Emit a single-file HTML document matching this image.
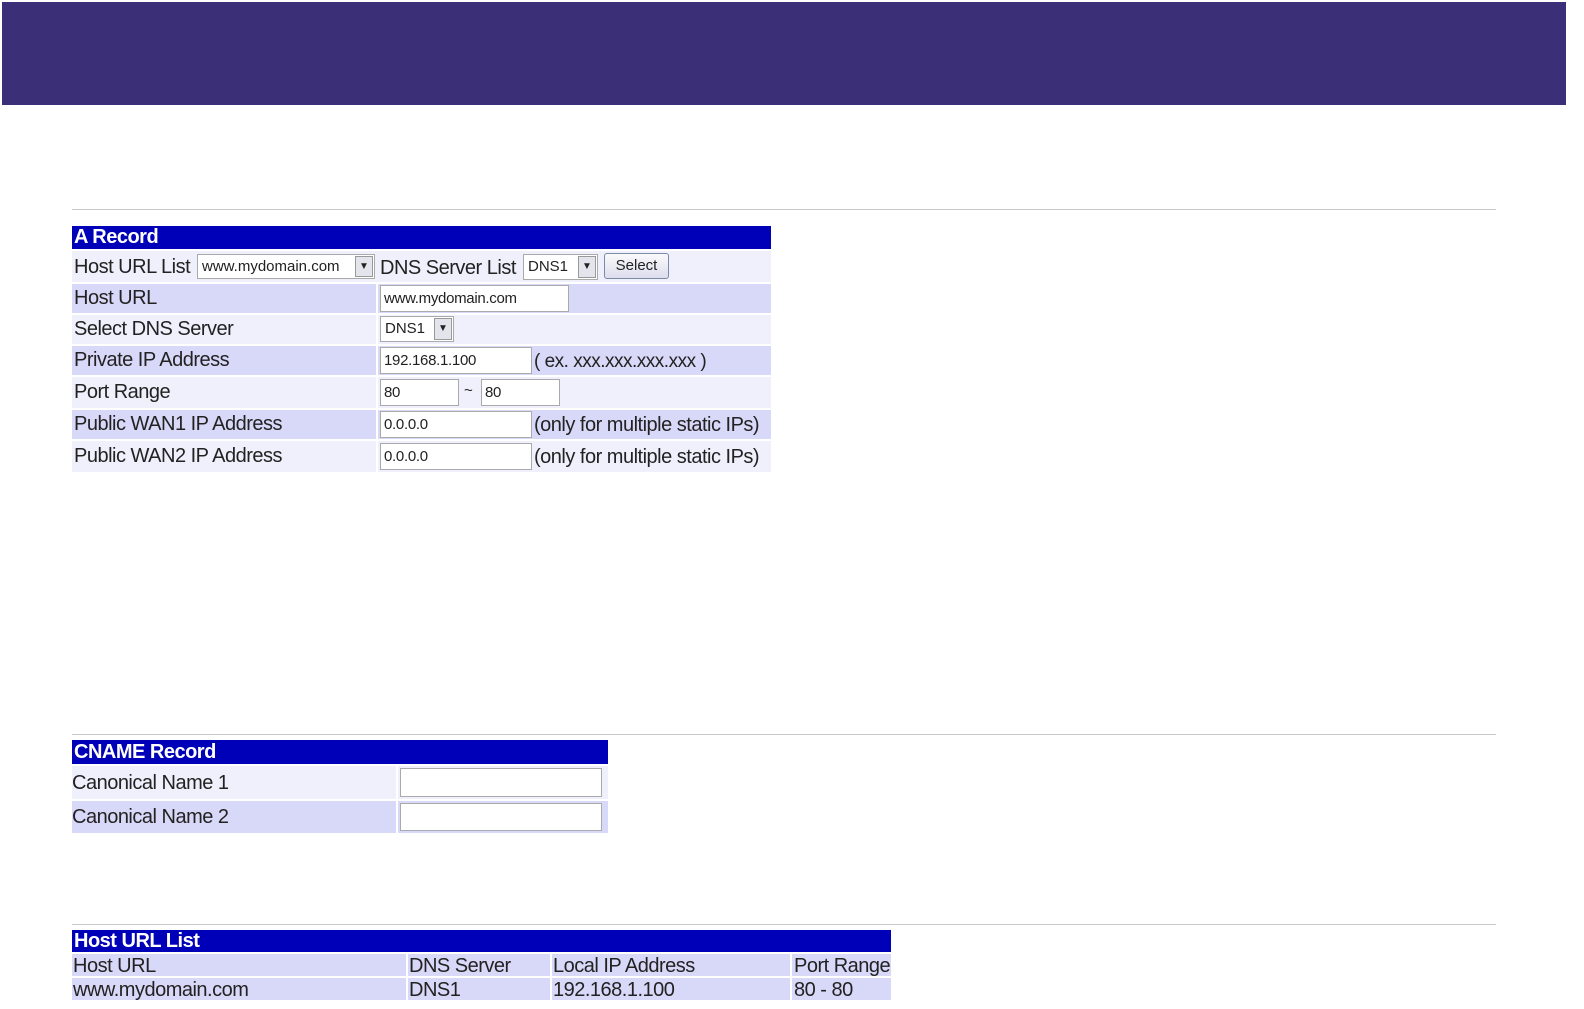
<!DOCTYPE html>
<html><head><meta charset="utf-8"><style>
*{margin:0;padding:0;box-sizing:border-box}
body{width:1584px;height:1009px;background:#fff;position:relative;overflow:hidden;font-family:"Liberation Sans",sans-serif;color:#222}
.a{position:absolute}
.top{left:2px;top:2px;width:1564px;height:103px;background:#3b2f78}
.hr{height:1px;background:#c8c8c8}
.hd{background:#0000b8;color:#fff;font-weight:bold;font-size:20px;line-height:23px;padding-left:2px;letter-spacing:-0.5px}
.l{background:#f0f0fc}.d{background:#d8d8f8}
.t{font-size:20px;letter-spacing:-0.5px;white-space:nowrap}
.in{background:#fff;border:1px solid #aaa;font-size:15px;padding-left:3px;white-space:nowrap;letter-spacing:-0.3px}
.sel{background:#fff;border:1px solid #aaa;font-size:15px;padding-left:4px;white-space:nowrap}
.arr{position:absolute;right:1px;top:1px;bottom:1px;width:18px;background:#e4e4ec;border:1px solid #999;font-size:10px;text-align:center;line-height:20px}
.btn{background:linear-gradient(#fafafa,#dde);border:1px solid #7a8aa8;border-radius:3px;font-size:15px;text-align:center}
</style></head><body>
<div class="a top"></div>
<div class="a hr" style="left:72px;top:209px;width:1424px"></div>

<div class="a hd" style="left:72px;top:226px;width:699px;height:23px">A Record</div>
<div class="a l" style="left:72px;top:251px;width:699px;height:31px"></div>
<div class="a d" style="left:72px;top:284px;width:304px;height:29px"></div><div class="a d" style="left:378px;top:284px;width:393px;height:29px"></div>
<div class="a l" style="left:72px;top:315px;width:304px;height:29px"></div><div class="a l" style="left:378px;top:315px;width:393px;height:29px"></div>
<div class="a d" style="left:72px;top:346px;width:304px;height:29px"></div><div class="a d" style="left:378px;top:346px;width:393px;height:29px"></div>
<div class="a l" style="left:72px;top:377px;width:304px;height:31px"></div><div class="a l" style="left:378px;top:377px;width:393px;height:31px"></div>
<div class="a d" style="left:72px;top:410px;width:304px;height:29px"></div><div class="a d" style="left:378px;top:410px;width:393px;height:29px"></div>
<div class="a l" style="left:72px;top:441px;width:304px;height:31px"></div><div class="a l" style="left:378px;top:441px;width:393px;height:31px"></div>

<div class="a t" style="left:74px;top:256px">Host URL List</div>
<div class="a sel" style="left:197px;top:254px;width:178px;height:25px;line-height:23px">www.mydomain.com<div class="arr">&#9660;</div></div>
<div class="a t" style="left:380px;top:257px">DNS Server List</div>
<div class="a sel" style="left:523px;top:254px;width:75px;height:26px;line-height:24px">DNS1<div class="arr">&#9660;</div></div>
<div class="a btn" style="left:604px;top:253px;width:65px;height:26px;line-height:24px">Select</div>

<div class="a t" style="left:74px;top:287px">Host URL</div>
<div class="a in" style="left:380px;top:285px;width:189px;height:27px;line-height:25px">www.mydomain.com</div>
<div class="a t" style="left:74px;top:318px">Select DNS Server</div>
<div class="a sel" style="left:380px;top:316px;width:74px;height:26px;line-height:24px">DNS1<div class="arr">&#9660;</div></div>
<div class="a t" style="left:74px;top:349px">Private IP Address</div>
<div class="a in" style="left:380px;top:347px;width:152px;height:27px;line-height:25px">192.168.1.100</div>
<div class="a t" style="left:534px;top:351px;font-size:19px">( ex. xxx.xxx.xxx.xxx )</div>
<div class="a t" style="left:74px;top:381px">Port Range</div>
<div class="a in" style="left:380px;top:379px;width:79px;height:27px;line-height:25px">80</div>
<div class="a t" style="left:464px;top:382px;font-size:15px">~</div>
<div class="a in" style="left:481px;top:379px;width:79px;height:27px;line-height:25px">80</div>
<div class="a t" style="left:74px;top:413px">Public WAN1 IP Address</div>
<div class="a in" style="left:380px;top:411px;width:152px;height:27px;line-height:25px">0.0.0.0</div>
<div class="a t" style="left:534px;top:414px">(only for multiple static IPs)</div>
<div class="a t" style="left:74px;top:445px">Public WAN2 IP Address</div>
<div class="a in" style="left:380px;top:443px;width:152px;height:27px;line-height:25px">0.0.0.0</div>
<div class="a t" style="left:534px;top:446px">(only for multiple static IPs)</div>

<div class="a hr" style="left:72px;top:734px;width:1424px"></div>
<div class="a hd" style="left:72px;top:740px;width:536px;height:24px;line-height:24px">CNAME Record</div>
<div class="a l" style="left:72px;top:766px;width:324px;height:33px"></div><div class="a l" style="left:398px;top:766px;width:210px;height:33px"></div>
<div class="a d" style="left:72px;top:801px;width:324px;height:32px"></div><div class="a d" style="left:398px;top:801px;width:210px;height:32px"></div>
<div class="a t" style="left:72px;top:772px">Canonical Name 1</div>
<div class="a in" style="left:400px;top:768px;width:202px;height:29px"></div>
<div class="a t" style="left:72px;top:806px">Canonical Name 2</div>
<div class="a in" style="left:400px;top:803px;width:202px;height:28px"></div>

<div class="a hr" style="left:72px;top:924px;width:1424px"></div>
<div class="a hd" style="left:72px;top:930px;width:819px;height:22px;line-height:22px">Host URL List</div>
<div class="a d" style="left:72px;top:954px;width:334px;height:22px"></div>
<div class="a d" style="left:408px;top:954px;width:142px;height:22px"></div>
<div class="a d" style="left:552px;top:954px;width:238px;height:22px"></div>
<div class="a d" style="left:792px;top:954px;width:99px;height:22px"></div>
<div class="a d" style="left:72px;top:978px;width:334px;height:22px"></div>
<div class="a d" style="left:408px;top:978px;width:142px;height:22px"></div>
<div class="a d" style="left:552px;top:978px;width:238px;height:22px"></div>
<div class="a d" style="left:792px;top:978px;width:99px;height:22px"></div>
<div class="a t" style="left:73px;top:955px">Host URL</div>
<div class="a t" style="left:409px;top:955px">DNS Server</div>
<div class="a t" style="left:553px;top:955px">Local IP Address</div>
<div class="a t" style="left:794px;top:955px">Port Range</div>
<div class="a t" style="left:73px;top:979px">www.mydomain.com</div>
<div class="a t" style="left:409px;top:979px">DNS1</div>
<div class="a t" style="left:553px;top:979px">192.168.1.100</div>
<div class="a t" style="left:794px;top:979px">80 - 80</div>
</body></html>
